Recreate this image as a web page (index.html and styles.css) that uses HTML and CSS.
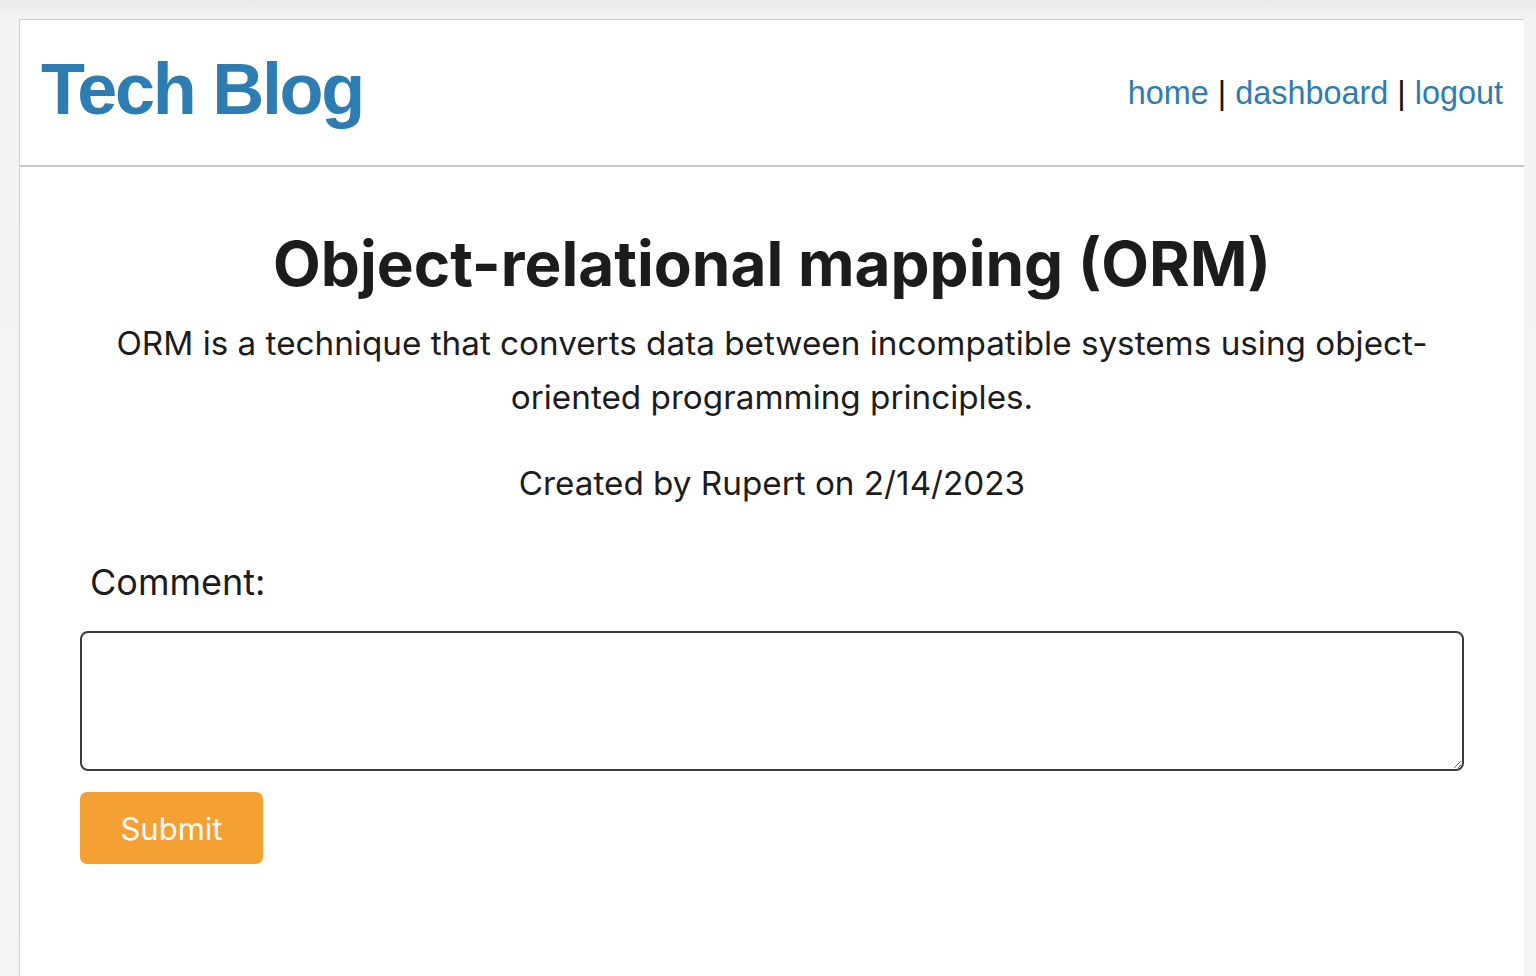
FILE: index.html
```html
<!DOCTYPE html>
<html lang="en">
<head>
<meta charset="utf-8">
<title>Tech Blog</title>
<link rel="stylesheet" href="styles.css">
</head>
<body>
<div class="page">
  <header class="site-header">
    <h1 class="brand">Tech Blog</h1>
    <nav class="nav">
      <a href="#">home</a> <span class="sep">|</span> <a href="#">dashboard</a> <span class="sep">|</span> <a href="#">logout</a>
    </nav>
  </header>
  <main class="post">
    <h2 class="post-title">Object-relational mapping (ORM)</h2>
    <p class="post-body">ORM is a technique that converts data between incompatible systems using object-oriented programming principles.</p>
    <p class="post-meta">Created by Rupert on 2/14/2023</p>
    <form class="comment-form">
      <label class="comment-label" for="comment">Comment:</label>
      <textarea id="comment" class="comment-input"></textarea>
      <button type="submit" class="submit-btn">Submit</button>
    </form>
  </main>
</div>
</body>
</html>
```

FILE: styles.css
```css
html, body {
  margin: 0;
  padding: 0;
}
body {
  background: linear-gradient(180deg, #ebebeb 0px, #f3f3f3 19px, #f4f4f5 100%);
  padding: 19px 12px 0 19px;
  min-height: 976px;
  box-sizing: border-box;
  font-family: Inter, "Liberation Sans", sans-serif;
  color: #1c1c1c;
}
.page {
  background: #fff;
  border-top: 1px solid #cfcfcf;
  border-left: 1px solid #cfcfcf;
  min-height: 956px;
}
.site-header {
  display: flex;
  justify-content: space-between;
  align-items: center;
  height: 145px;
  padding: 0 21px;
  border-bottom: 2px solid #c9c9c9;
}
.brand {
  margin: 0;
  font-family: "Liberation Sans", Arial, sans-serif;
  font-weight: 700;
  font-size: 72px;
  letter-spacing: -2.3px;
  color: #2d7db3;
  line-height: 1;
  padding-bottom: 8px;
}
.nav {
  font-family: "Liberation Sans", Arial, sans-serif;
  font-size: 32.4px;
  color: #111;
  padding-top: 2px;
}
.nav a {
  color: #2d7db3;
  text-decoration: none;
}
.post {
  display: flex;
  flex-direction: column;
  align-items: center;
  padding: 60px 60px 40px;
}
.post-title {
  margin: 0;
  font-size: 62px;
  font-weight: 700;
  line-height: 1.2;
}
.post-body {
  margin: 15px 0 0;
  font-size: 33.25px;
  line-height: 54px;
  text-align: center;
  max-width: 1345px;
}
.post-meta {
  margin: 32px 0 0;
  font-size: 33.25px;
  line-height: 54px;
}
.comment-form {
  align-self: stretch;
  display: flex;
  flex-direction: column;
  align-items: flex-start;
  margin-top: 50px;
}
.comment-label {
  font-size: 36px;
  line-height: 44px;
  margin-left: 10px;
}
.comment-input {
  box-sizing: border-box;
  width: 1384px;
  height: 140px;
  margin-top: 27px;
  border: 2px solid #3c3c3c;
  border-radius: 8px;
  font-size: 20px;
  padding: 8px;
  resize: vertical;
}
.submit-btn {
  margin-top: 21px;
  width: 183px;
  height: 72px;
  border: none;
  border-radius: 7px;
  background: #f5a033;
  color: #fff;
  font-family: Inter, "Liberation Sans", sans-serif;
  font-size: 31px;
}
```
